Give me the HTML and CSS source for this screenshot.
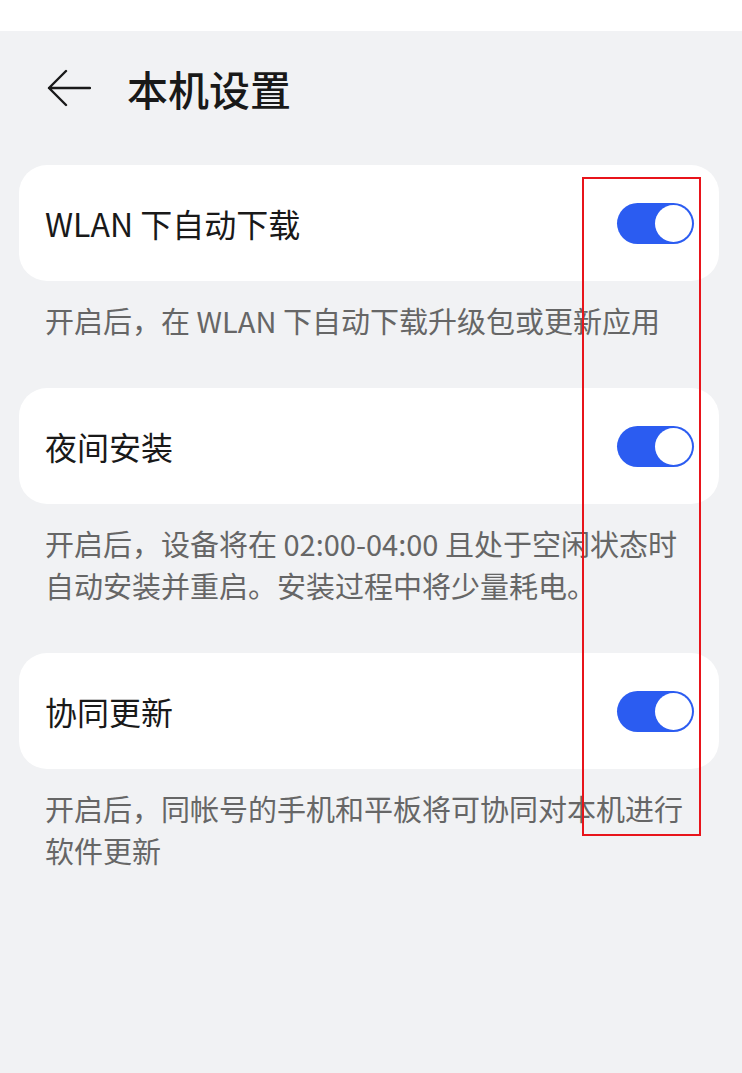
FILE: index.html
```html
<!DOCTYPE html>
<html lang="zh-CN">
<head>
<meta charset="utf-8">
<title>本机设置</title>
<link rel="stylesheet" href="styles.css">
</head>
<body>
  <div class="statusbar"></div>
  <main class="page">
    <header class="header">
      <svg class="back" width="44" height="38" viewBox="0 0 44 38" aria-hidden="true">
        <path d="M19 2 L2 19 L19 36 M2 19 H43" fill="none" stroke="#191919" stroke-width="2.4" stroke-linecap="round" stroke-linejoin="round"/>
      </svg>
      <h1 class="title">本机设置</h1>
    </header>
    <section class="list">
      <div class="card">
        <span class="card-title">WLAN 下自动下载</span>
        <span class="toggle"><span class="knob"></span></span>
      </div>
      <p class="desc">开启后，在 WLAN 下自动下载升级包或更新应用</p>

      <div class="card">
        <span class="card-title">夜间安装</span>
        <span class="toggle"><span class="knob"></span></span>
      </div>
      <p class="desc">开启后，设备将在 02:00-04:00 且处于空闲状态时自动安装并重启。安装过程中将少量耗电。</p>

      <div class="card">
        <span class="card-title">协同更新</span>
        <span class="toggle"><span class="knob"></span></span>
      </div>
      <p class="desc">开启后，同帐号的手机和平板将可协同对本机进行软件更新</p>
    </section>
  </main>
  <div class="highlight"></div>
</body>
</html>
```

FILE: styles.css
```css
html, body {
  margin: 0;
  padding: 0;
}
body {
  width: 742px;
  height: 1073px;
  overflow: hidden;
  background: #f1f2f4;
  font-family: "Noto Sans CJK SC", "Noto Sans", sans-serif;
  position: relative;
}
.statusbar {
  height: 31px;
  background: #ffffff;
}
.page {
  background: #f1f2f4;
}
.header {
  height: 114px;
  display: flex;
  align-items: center;
  padding-left: 47px;
}
.back {
  display: block;
  flex: none;
}
.title {
  margin: 0 0 0 36px;
  font-size: 41px;
  font-weight: 500;
  color: #191919;
  line-height: 56px;
}
.list {
  padding: 20px 23px 0 19px;
  display: flex;
  flex-direction: column;
}
.card {
  height: 116px;
  background: #ffffff;
  border-radius: 28px;
  display: flex;
  align-items: center;
  justify-content: space-between;
  padding: 0 25px 0 26px;
}
.card + .desc {
  margin-top: 18px;
}
.desc + .card {
  margin-top: 47px;
}
.card-title {
  font-size: 32px;
  font-weight: 400;
  color: #191919;
}
.toggle {
  width: 77px;
  height: 41px;
  border-radius: 21px;
  background: #2b5cf1;
  box-sizing: border-box;
  padding: 2px;
  display: flex;
  justify-content: flex-end;
  align-items: center;
}
.knob {
  width: 37px;
  height: 37px;
  border-radius: 50%;
  background: #ffffff;
}
.desc {
  margin: 0;
  padding: 0 24px 0 26px;
  font-size: 29px;
  line-height: 42px;
  color: #666666;
}
.highlight {
  position: absolute;
  left: 582px;
  top: 177px;
  width: 115px;
  height: 655px;
  border: 2px solid #e8141b;
}
```
